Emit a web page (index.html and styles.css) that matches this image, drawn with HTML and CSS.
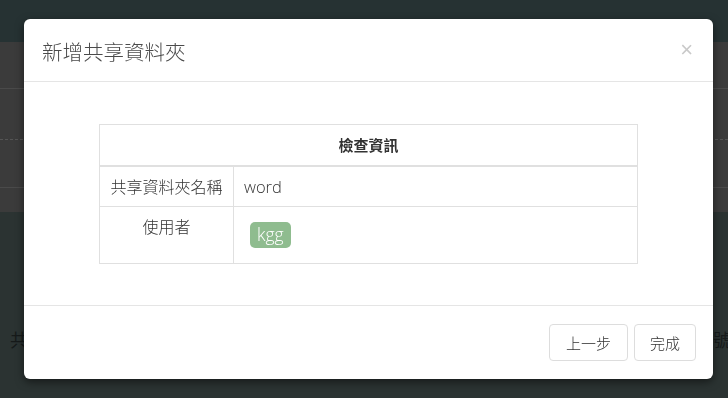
FILE: index.html
```html
<!DOCTYPE html>
<html lang="zh-Hant">
<head>
    <meta charset="UTF-8">
    <meta name="viewport" content="width=device-width, initial-scale=1.0">
    <title>新增共享資料夾</title>
    <link rel="stylesheet" href="styles.css">
</head>
<body>
    <!-- Seite im Hintergrund -->
    <div class="page">
        <div class="topbar"></div>
        <div class="panel">
            <div class="panel-row first"></div>
            <div class="panel-row dashed"></div>
            <div class="panel-row"></div>
            <div class="panel-row last"></div>
        </div>
        <div class="page-bottom">
            <span class="bg-left">共</span>
            <span class="bg-right">號</span>
        </div>
    </div>

    <!-- Dialog -->
    <div class="backdrop">
        <div class="modal">
            <div class="modal-header">
                <h4 class="modal-title">新增共享資料夾</h4>
                <button class="close">&times;</button>
            </div>
            <div class="modal-body">
                <table class="check-table">
                    <tr class="head">
                        <th colspan="2">檢查資訊</th>
                    </tr>
                    <tr class="name">
                        <td class="label">共享資料夾名稱</td>
                        <td class="value">word</td>
                    </tr>
                    <tr class="users">
                        <td class="label">使用者</td>
                        <td class="value"><span class="tag">kgg</span></td>
                    </tr>
                </table>
            </div>
            <div class="modal-footer">
                <button class="btn">上一步</button>
                <button class="btn done">完成</button>
            </div>
        </div>
    </div>
</body>
</html>
```

FILE: styles.css
```css
/* Seite Layout */
body {
    margin: 0;
    height: 398px;
    overflow: hidden;
    font-family: "Noto Sans CJK TC", "Noto Sans", sans-serif;
    background-color: #2b3332;
}

.page {
    display: flex;
    flex-direction: column;
    height: 398px;
}

.topbar {
    height: 42px;
    background-color: #263233;
}

.panel {
    height: 170px;
    background-color: #3b3b3b;
    display: flex;
    flex-direction: column;
}

.panel-row {
    height: 47px;
    border-bottom: 1px solid #4a4a4a;
}

.panel-row.first {
    height: 46px;
}

.panel-row.dashed {
    height: 50px;
    border-bottom: 1px dashed #555;
}

.panel-row.last {
    height: 22px;
    border-bottom: none;
}

.page-bottom {
    flex: 1;
    display: flex;
    justify-content: space-between;
    align-items: flex-start;
    padding-top: 114px;
    color: #161a1a;
    font-size: 18px;
}

.bg-left {
    margin-left: 10px;
}

.bg-right {
    margin-right: 0;
    width: 15px;
    overflow: hidden;
    white-space: nowrap;
}

/* Dialog */
.backdrop {
    position: fixed;
    top: 0;
    left: 0;
    width: 100%;
    height: 100%;
}

.modal {
    margin: 19px 0 0 24px;
    width: 689px;
    height: 360px;
    background-color: white;
    border-radius: 6px;
    box-shadow: 0 3px 9px rgba(0, 0, 0, 0.5);
    display: flex;
    flex-direction: column;
}

.modal-header {
    height: 63px;
    border-bottom: 1px solid #e5e5e5;
    display: flex;
    align-items: center;
    justify-content: space-between;
    padding: 0 20px 0 18px;
    box-sizing: border-box;
}

.modal-title {
    margin: 0;
    font-size: 20.5px;
    font-weight: 300;
    color: #4a4a4a;
    padding-top: 2px;
}

.close {
    border: none;
    background: none;
    padding: 0;
    font-family: "Liberation Sans", sans-serif;
    font-size: 22px;
    line-height: 1;
    color: #c9c9c9;
    margin-top: 0;
    cursor: pointer;
}

.modal-body {
    flex: 1;
    padding: 42px 75px 0 75px;
}

.check-table {
    width: 100%;
    border-collapse: collapse;
    color: #333;
}

.check-table th,
.check-table td {
    border: 1px solid #e0e0e0;
    padding: 0 10px;
}

.head {
    height: 41px;
}

.check-table th {
    font-size: 15px;
    font-weight: 600;
    border-bottom-width: 2px;
}

.name {
    height: 41px;
}

.check-table td {
    font-size: 16px;
    font-weight: 300;
}

.check-table .label {
    width: 113px;
    text-align: center;
}

.check-table .value {
    font-family: "Open Sans", "Noto Sans CJK TC", sans-serif;
    font-size: 16.5px;
}

.users {
    height: 57px;
}

.users td {
    vertical-align: top;
}

.users .label {
    padding-top: 7px;
}

.tag {
    display: inline-block;
    margin: 15px 0 0 6px;
    padding: 0 7px;
    height: 26px;
    line-height: 25px;
    background-color: #8fbc8f;
    color: white;
    border-radius: 5px;
    font-size: 17.5px;
}

.modal-footer {
    height: 74px;
    border-top: 1px solid #e5e5e5;
    display: flex;
    justify-content: flex-end;
    align-items: flex-start;
    gap: 6px;
    padding: 18px 17px 0 0;
    box-sizing: border-box;
}

.btn {
    height: 37px;
    padding: 0 16px;
    background-color: white;
    border: 1px solid #ddd;
    border-radius: 4px;
    font-family: "Noto Sans CJK TC", sans-serif;
    font-size: 15px;
    font-weight: 300;
    color: #333;
    cursor: pointer;
}

.btn.done {
    padding: 0 15px;
}
```
